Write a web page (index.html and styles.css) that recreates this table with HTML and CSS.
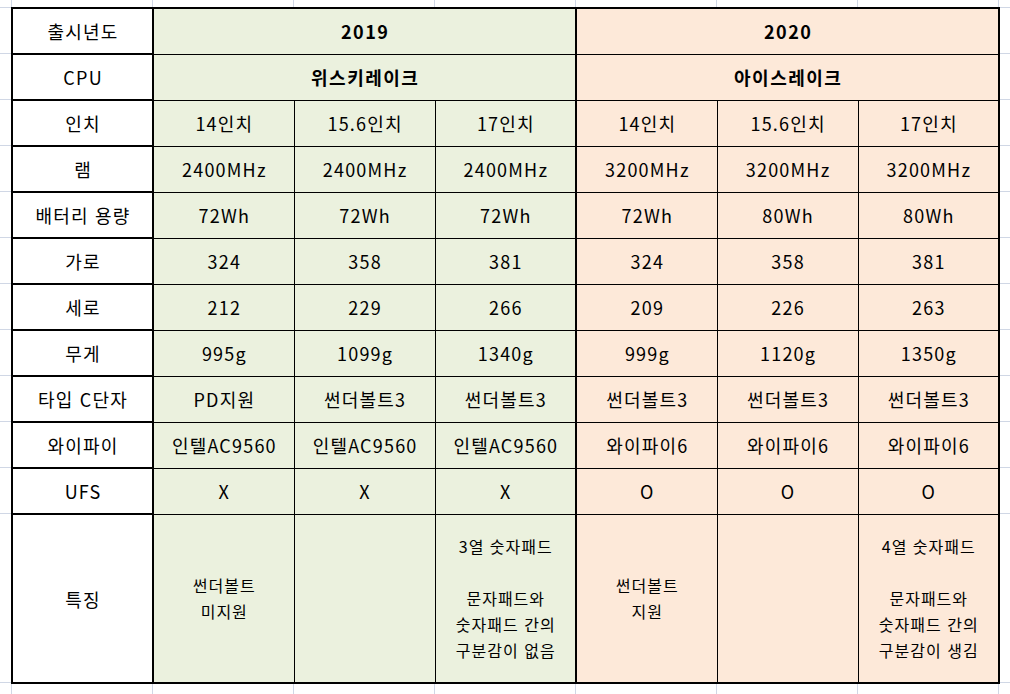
FILE: index.html
```html
<!DOCTYPE html>
<html lang="ko">
<head>
<meta charset="utf-8">
<title>노트북 사양 비교</title>
<link rel="stylesheet" href="styles.css">
</head>
<body>
<table class="spec">
  <colgroup>
    <col class="c-label">
    <col class="c-data"><col class="c-data"><col class="c-data">
    <col class="c-data"><col class="c-data"><col class="c-data">
  </colgroup>
  <tr>
    <th class="label">출시년도</th>
    <td class="g head" colspan="3">2019</td>
    <td class="o head sep" colspan="3">2020</td>
  </tr>
  <tr>
    <th class="label">CPU</th>
    <td class="g head" colspan="3">위스키레이크</td>
    <td class="o head sep" colspan="3">아이스레이크</td>
  </tr>
  <tr>
    <th class="label">인치</th>
    <td class="g">14인치</td><td class="g">15.6인치</td><td class="g">17인치</td>
    <td class="o sep">14인치</td><td class="o">15.6인치</td><td class="o">17인치</td>
  </tr>
  <tr>
    <th class="label">램</th>
    <td class="g">2400MHz</td><td class="g">2400MHz</td><td class="g">2400MHz</td>
    <td class="o sep">3200MHz</td><td class="o">3200MHz</td><td class="o">3200MHz</td>
  </tr>
  <tr>
    <th class="label">배터리 용량</th>
    <td class="g">72Wh</td><td class="g">72Wh</td><td class="g">72Wh</td>
    <td class="o sep">72Wh</td><td class="o">80Wh</td><td class="o">80Wh</td>
  </tr>
  <tr>
    <th class="label">가로</th>
    <td class="g">324</td><td class="g">358</td><td class="g">381</td>
    <td class="o sep">324</td><td class="o">358</td><td class="o">381</td>
  </tr>
  <tr>
    <th class="label">세로</th>
    <td class="g">212</td><td class="g">229</td><td class="g">266</td>
    <td class="o sep">209</td><td class="o">226</td><td class="o">263</td>
  </tr>
  <tr>
    <th class="label">무게</th>
    <td class="g">995g</td><td class="g">1099g</td><td class="g">1340g</td>
    <td class="o sep">999g</td><td class="o">1120g</td><td class="o">1350g</td>
  </tr>
  <tr>
    <th class="label">타입 C단자</th>
    <td class="g">PD지원</td><td class="g">썬더볼트3</td><td class="g">썬더볼트3</td>
    <td class="o sep">썬더볼트3</td><td class="o">썬더볼트3</td><td class="o">썬더볼트3</td>
  </tr>
  <tr>
    <th class="label">와이파이</th>
    <td class="g">인텔AC9560</td><td class="g">인텔AC9560</td><td class="g">인텔AC9560</td>
    <td class="o sep">와이파이6</td><td class="o">와이파이6</td><td class="o">와이파이6</td>
  </tr>
  <tr>
    <th class="label">UFS</th>
    <td class="g">X</td><td class="g">X</td><td class="g">X</td>
    <td class="o sep">O</td><td class="o">O</td><td class="o">O</td>
  </tr>
  <tr class="tall">
    <th class="label">특징</th>
    <td class="g note">썬더볼트<br>미지원</td>
    <td class="g note"></td>
    <td class="g note">3열 숫자패드<br><br>문자패드와<br>숫자패드 간의<br>구분감이 없음</td>
    <td class="o note sep">썬더볼트<br>지원</td>
    <td class="o note"></td>
    <td class="o note">4열 숫자패드<br><br>문자패드와<br>숫자패드 간의<br>구분감이 생김</td>
  </tr>
</table>
</body>
</html>
```

FILE: styles.css
```css
html, body {
  margin: 0;
  padding: 0;
}

body {
  width: 1010px;
  height: 694px;
  overflow: hidden;
  background-color: #ffffff;
  background-image:
    repeating-linear-gradient(90deg, #d0d7e5 0 1px, transparent 1px 141px),
    repeating-linear-gradient(180deg, #d0d7e5 0 1px, transparent 1px 46px),
    linear-gradient(#d0d7e5, #d0d7e5);
  background-position: 11px 0, 0 7px, 0 682px;
  background-size: auto, 100% 507px, 100% 1px;
  background-repeat: repeat, no-repeat, no-repeat;
  font-family: "Noto Sans CJK KR", "Noto Sans", sans-serif;
  color: #000;
}

.spec {
  border-collapse: collapse;
  table-layout: fixed;
  margin: 7px 0 0 11px;
  width: 987px;
  border: 2px solid #000;
}

.c-label { width: 141px; }
.c-data { width: 141px; }

.spec th,
.spec td {
  border: 1px solid #000;
  padding: 0 0 0 1.2px;
  text-align: center;
  vertical-align: middle;
  font-size: 18px;
  font-weight: 400;
  letter-spacing: 1.2px;
  line-height: 24px;
  white-space: nowrap;
}

.spec tr { height: 46px; }
.spec tr.tall { height: 169px; }

.spec .label {
  border: 2px solid #000;
  background: #ffffff;
}

.g { background: #ebf1de; }
.o { background: #fde9d9; }

.spec .sep { border-left: 2px solid #000; }

.spec .head {
  font-weight: 700;
  letter-spacing: 1.5px;
  padding-left: 1.5px;
}

.spec .note {
  font-size: 16px;
  letter-spacing: 1px;
  padding-left: 1px;
  line-height: 26px;
}
```
